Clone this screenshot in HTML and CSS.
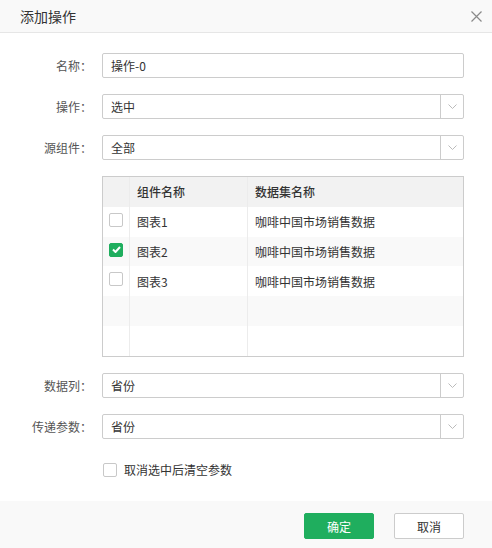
FILE: index.html
```html
<!DOCTYPE html>
<html lang="zh-CN">
<head>
<meta charset="utf-8">
<title>添加操作</title>
<link rel="stylesheet" href="styles.css">
</head>
<body>
<div class="dialog">
  <div class="header">
    <span class="title">添加操作</span>
    <svg class="close" width="11" height="11" viewBox="0 0 11 11"><path d="M0.5 0.5 L10.5 10.5 M10.5 0.5 L0.5 10.5" stroke="#8a8a8a" stroke-width="1.2" fill="none"/></svg>
  </div>
  <div class="body">
    <div class="row">
      <label class="lbl">名称：</label>
      <div class="ctrl input">操作-0</div>
    </div>
    <div class="row">
      <label class="lbl">操作：</label>
      <div class="ctrl select"><span class="val">选中</span><span class="arrow"><svg width="9" height="5" viewBox="0 0 9 5"><path d="M0.5 0.5 L4.5 4.5 L8.5 0.5" stroke="#bbb" fill="none"/></svg></span></div>
    </div>
    <div class="row">
      <label class="lbl">源组件：</label>
      <div class="ctrl select"><span class="val">全部</span><span class="arrow"><svg width="9" height="5" viewBox="0 0 9 5"><path d="M0.5 0.5 L4.5 4.5 L8.5 0.5" stroke="#bbb" fill="none"/></svg></span></div>
    </div>
    <div class="row">
      <span class="lbl"></span>
      <div class="table">
        <div class="tr thead"><div class="td"></div><div class="td">组件名称</div><div class="td">数据集名称</div></div>
        <div class="tr"><div class="td cb-cell"><span class="cb"></span></div><div class="td">图表1</div><div class="td">咖啡中国市场销售数据</div></div>
        <div class="tr alt"><div class="td cb-cell"><span class="cb checked"><svg width="9" height="7" viewBox="0 0 9 7"><path d="M1 3.5 L3.5 6 L8 1" stroke="#fff" stroke-width="2" fill="none"/></svg></span></div><div class="td">图表2</div><div class="td">咖啡中国市场销售数据</div></div>
        <div class="tr"><div class="td cb-cell"><span class="cb"></span></div><div class="td">图表3</div><div class="td">咖啡中国市场销售数据</div></div>
        <div class="tr alt"><div class="td"></div><div class="td"></div><div class="td"></div></div>
        <div class="tr"><div class="td"></div><div class="td"></div><div class="td"></div></div>
      </div>
    </div>
    <div class="row">
      <label class="lbl">数据列：</label>
      <div class="ctrl select"><span class="val">省份</span><span class="arrow"><svg width="9" height="5" viewBox="0 0 9 5"><path d="M0.5 0.5 L4.5 4.5 L8.5 0.5" stroke="#bbb" fill="none"/></svg></span></div>
    </div>
    <div class="row">
      <label class="lbl">传递参数：</label>
      <div class="ctrl select"><span class="val">省份</span><span class="arrow"><svg width="9" height="5" viewBox="0 0 9 5"><path d="M0.5 0.5 L4.5 4.5 L8.5 0.5" stroke="#bbb" fill="none"/></svg></span></div>
    </div>
    <div class="row check-row">
      <span class="lbl"></span>
      <div class="check"><span class="cb"></span><span>取消选中后清空参数</span></div>
    </div>
  </div>
  <div class="footer">
    <button class="btn primary">确定</button>
    <button class="btn">取消</button>
  </div>
</div>
</body>
</html>
```

FILE: styles.css
```css
* { box-sizing: border-box; }
html, body {
  margin: 0;
  padding: 0;
  background: #fff;
}
body {
  font-family: "Noto Sans CJK SC", "Noto Sans", sans-serif;
  font-size: 12px;
  color: #333;
}
.dialog {
  width: 492px;
  height: 548px;
  display: flex;
  flex-direction: column;
}
.header {
  height: 33px;
  background: #f9f9f9;
  border-bottom: 1px solid #e6e6e6;
  display: flex;
  align-items: center;
  justify-content: space-between;
  padding: 0 10px 0 20px;
}
.title {
  font-size: 14px;
  color: #333;
  line-height: 1;
}
.close { display: block; }
.body {
  flex: 1;
  padding: 20px 28px 0 0;
  display: flex;
  flex-direction: column;
  gap: 16px;
}
.row {
  display: flex;
  align-items: flex-start;
}
.lbl {
  width: 94px;
  flex: none;
  text-align: right;
  padding-right: 2px;
  color: #555;
  line-height: 25px;
  height: 25px;
  margin-right: 8px;
}
.ctrl {
  flex: 1;
  height: 25px;
  border: 1px solid #ccc;
  border-radius: 2px;
  line-height: 23px;
  color: #333;
}
.input { padding-left: 8px; }
.select {
  display: flex;
}
.select .val { flex: 1; padding-left: 8px; }
.arrow {
  width: 23px;
  border-left: 1px solid #ccc;
  display: flex;
  align-items: center;
  justify-content: center;
}
.arrow svg { display: block; }
.table {
  flex: 1;
  border: 1px solid #ccc;
  height: 181px;
  display: flex;
  flex-direction: column;
}
.tr {
  display: grid;
  grid-template-columns: 27px 118px 1fr;
  height: 30px;
}
.tr.thead {
  background: #f2f2f2;
  font-weight: 500;
}
.tr.alt { background: #f9f9f9; }
.td {
  border-right: 1px solid #ececec;
  padding-left: 7px;
  display: flex;
  align-items: center;
  color: #333;
}
.td:last-child { border-right: none; }
.td.cb-cell { padding-left: 6px; padding-bottom: 4px; }
.cb {
  width: 14px;
  height: 14px;
  border: 1px solid #c8c8c8;
  border-radius: 2px;
  background: #fff;
  display: inline-flex;
  align-items: center;
  justify-content: center;
  flex: none;
}
.cb.checked {
  background: #1fae5e;
  border-color: #1fae5e;
}
.cb svg { display: block; }
.check-row { margin-top: 6px; }
.check {
  display: flex;
  align-items: center;
  gap: 7px;
  color: #333;
  padding-left: 1px;
}
.footer {
  height: 47px;
  background: #f9f9f9;
  display: flex;
  justify-content: flex-end;
  align-items: flex-start;
  padding: 12px 28px 0 0;
  gap: 20px;
}
.btn {
  width: 70px;
  height: 26px;
  border: 1px solid #ccc;
  border-radius: 2px;
  background: #fff;
  font-family: inherit;
  font-size: 12px;
  color: #333;
  padding: 0;
}
.btn.primary {
  background: #1fae5e;
  border-color: #1fae5e;
  color: #fff;
}
```
